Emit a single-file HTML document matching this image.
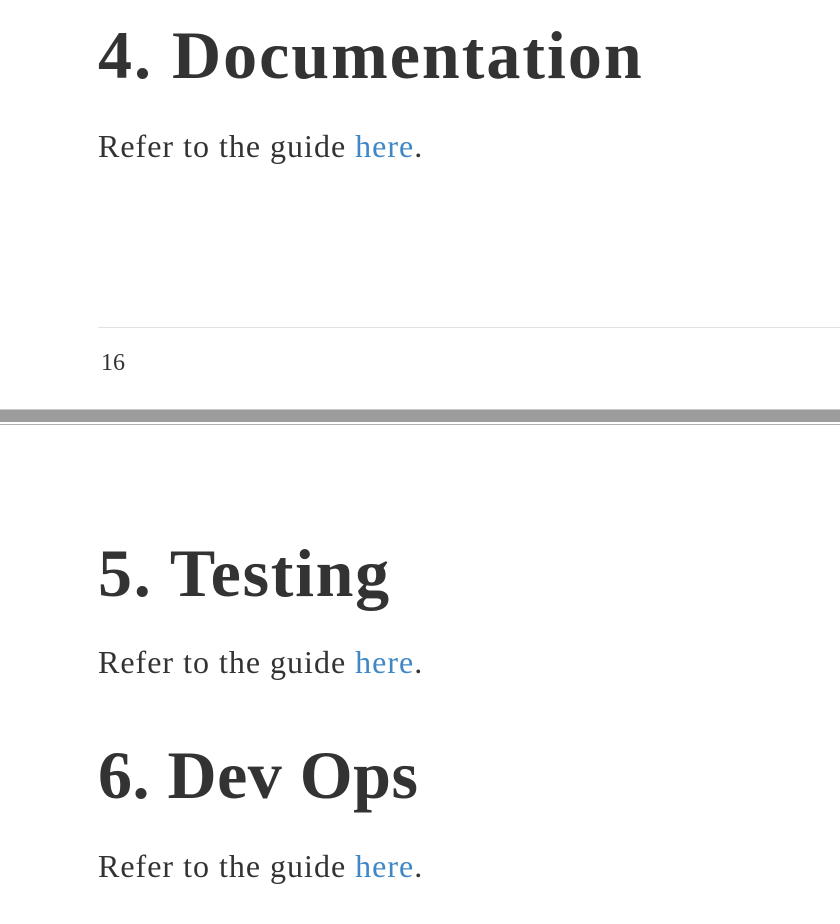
<!DOCTYPE html>
<html><head><meta charset="utf-8"><style>
html,body{margin:0;padding:0;background:#fff;width:840px;height:924px;overflow:hidden;position:relative;font-family:"Liberation Serif",serif;color:#333}
.h{position:absolute;left:98px;font-size:68px;line-height:68px;font-weight:bold;white-space:nowrap;letter-spacing:0.5px}
.p{position:absolute;left:98px;font-size:32px;line-height:32px;white-space:nowrap;letter-spacing:1px}
a{color:#3f88c5;text-decoration:none}
</style></head><body>
<div class="h" style="top:21px;letter-spacing:2px">4. Documentation</div>
<div class="p" style="top:130px">Refer to the guide <a>here</a>.</div>
<div style="position:absolute;left:98px;right:0;top:327px;height:1px;background:#e2e2e2"></div>
<div style="position:absolute;left:101px;top:351px;font-size:24px;line-height:24px">16</div>
<div style="position:absolute;left:0;right:0;top:409px;height:1px;background:#c8c8c8"></div>
<div style="position:absolute;left:0;right:0;top:410px;height:12px;background:#9c9c9c"></div>
<div style="position:absolute;left:0;right:0;top:424px;height:1px;background:#b0b0b0"></div>
<div class="h" style="top:539px;letter-spacing:1.7px">5. Testing</div>
<div class="p" style="top:646px">Refer to the guide <a>here</a>.</div>
<div class="h" style="top:741px">6. Dev Ops</div>
<div class="p" style="top:850px">Refer to the guide <a>here</a>.</div>
</body></html>
